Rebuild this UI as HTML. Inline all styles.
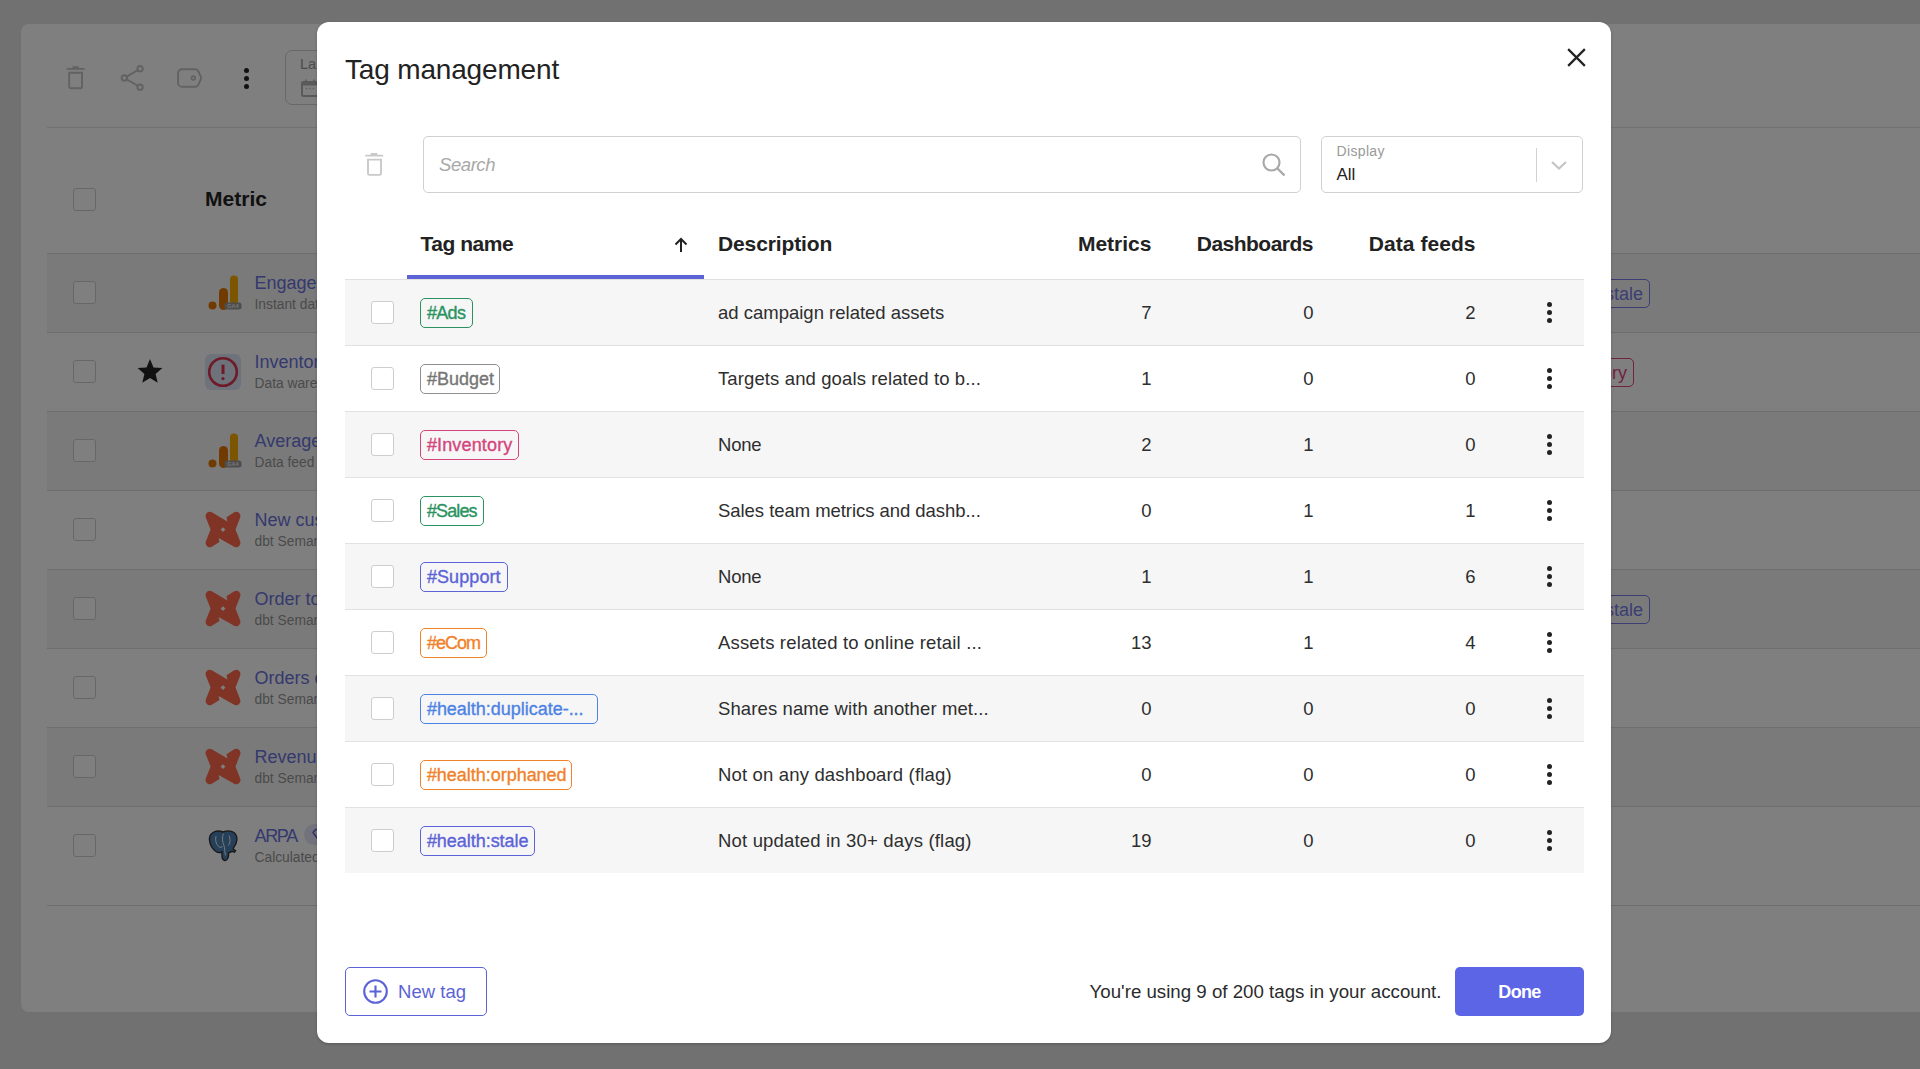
<!DOCTYPE html>
<html><head><meta charset="utf-8"><style>
html,body{margin:0;padding:0;}
body{width:1920px;height:1069px;overflow:hidden;position:relative;background:#e2e2e2;font-family:"Liberation Sans",sans-serif;}
.a{position:absolute;}
.t{position:absolute;white-space:nowrap;}
.tg{box-sizing:border-box;border-radius:5px;font-size:18px;line-height:27px;padding:0;text-align:center;white-space:nowrap;background:transparent;}
svg{overflow:visible;}
</style></head><body>
<div class="a" style="left:21px;top:24px;width:1960px;height:988px;background:#fff;border-radius:8px;"></div>
<svg class="a" style="left:64px;top:64px" width="24" height="28" viewBox="0 0 24 28">
<path d="M2.7 4.85h17.9M8.5 3.2h6.2" stroke="#c4c4c4" stroke-width="1.7" fill="none"/>
<path d="M5.2 8.7V22.8A1.5 1.5 0 0 0 6.7 24.3H16.5A1.5 1.5 0 0 0 18 22.8V8.7Z" stroke="#c4c4c4" stroke-width="1.9" fill="none"/></svg>
<svg class="a" style="left:118px;top:63px" width="30" height="30" viewBox="0 0 30 30">
<circle cx="6.3" cy="15" r="2.7" stroke="#c4c4c4" stroke-width="1.9" fill="none"/>
<circle cx="22.1" cy="5.7" r="2.7" stroke="#c4c4c4" stroke-width="1.9" fill="none"/>
<circle cx="22.1" cy="24.2" r="2.7" stroke="#c4c4c4" stroke-width="1.9" fill="none"/>
<path d="M8.6 13.6L19.8 7.1M8.6 16.4L19.8 22.8" stroke="#c4c4c4" stroke-width="1.8" fill="none"/></svg>
<svg class="a" style="left:174px;top:64px" width="32" height="28" viewBox="0 0 32 28">
<path d="M8 5.3H21.4Q23 5.3 24 6.8L26.8 12.5Q27.4 14 26.8 15.5L24 21.3Q23 22.8 21.4 22.8H8A3.9 3.9 0 0 1 4.1 18.9V9.2A3.9 3.9 0 0 1 8 5.3Z" stroke="#c4c4c4" stroke-width="1.9" fill="none"/>
<circle cx="19.3" cy="14" r="1.9" stroke="#c4c4c4" stroke-width="1.7" fill="none"/></svg>
<div class="a" style="left:244px;top:68.0px;width:5px;height:5px;border-radius:50%;background:#222"></div>
<div class="a" style="left:244px;top:76.0px;width:5px;height:5px;border-radius:50%;background:#222"></div>
<div class="a" style="left:244px;top:84.0px;width:5px;height:5px;border-radius:50%;background:#222"></div>
<div class="a" style="left:285px;top:50px;width:400px;height:55px;border:1.5px solid #d0d0d0;border-radius:7px;box-sizing:border-box;"></div>
<div class="t" style="left:300.00px;top:57.23px;font-size:14.5px;line-height:14.5px;color:#999;font-weight:400;font-style:normal;">Last 30 days</div>
<svg class="a" style="left:300px;top:78px" width="20" height="20" viewBox="0 0 20 20">
<rect x="2" y="4" width="16" height="14" rx="1.5" stroke="#b4b4b4" stroke-width="2" fill="none"/>
<rect x="2" y="4" width="16" height="3.5" fill="#b4b4b4"/>
<path d="M6 1.5v3M14 1.5v3" stroke="#b4b4b4" stroke-width="1.6"/>
<path d="M6 10.5h1.2M9.4 10.5h1.2M12.8 10.5h1.2" stroke="#b4b4b4" stroke-width="1.6"/></svg>
<div class="a" style="left:47px;top:127px;width:1900px;height:1px;background:#e2e2e2;"></div>
<div class="a" style="left:73px;top:188px;width:23px;height:23px;border:1.5px solid #cfcfcf;border-radius:3px;box-sizing:border-box;background:#fff;"></div>
<div class="t" style="left:205.00px;top:188.22px;font-size:21px;line-height:21px;color:#222;font-weight:700;font-style:normal;letter-spacing:0.026px;">Metric</div>
<div class="a" style="left:47px;top:253px;width:1900px;height:1px;background:#dcdcdc;"></div>
<div class="a" style="left:47px;top:254px;width:1900px;height:78px;background:#f5f5f5;"></div>
<div class="a" style="left:47px;top:332px;width:1900px;height:1px;background:#dcdcdc;"></div>
<div class="a" style="left:73px;top:281px;width:23px;height:23px;border:1.5px solid #cfcfcf;border-radius:3px;box-sizing:border-box;background:#fff;"></div>
<svg class="a" style="left:206px;top:274px" width="38" height="38" viewBox="0 0 38 38">
<circle cx="6.5" cy="31.5" r="4" fill="#e37400"/>
<rect x="13" y="14" width="9" height="22" rx="4.5" fill="#e37400"/>
<rect x="24" y="1.5" width="8" height="30" rx="4" fill="#f9ab00"/>
<rect x="18.5" y="28.5" width="17" height="7" rx="2.5" fill="#9c9c9c"/>
<text x="27" y="34.3" font-size="5.5" font-family="Liberation Sans" font-weight="700" text-anchor="middle" fill="#e8e8e8">GA4</text></svg>
<div class="t" style="left:254.50px;top:273.76px;font-size:18px;line-height:18px;color:#6a72dc;font-weight:400;font-style:normal;">Engagement rate</div>
<div class="t" style="left:254.50px;top:298.32px;font-size:13.8px;line-height:13.8px;color:#959595;font-weight:400;font-style:normal;">Instant data feed</div>
<div class="a tg" style="right:270px;top:279px;height:29px;padding:1px 6px 0;border:1.5px solid #747de6;color:#747de6;">#health:stale</div>
<div class="a" style="left:47px;top:411px;width:1900px;height:1px;background:#dcdcdc;"></div>
<div class="a" style="left:73px;top:360px;width:23px;height:23px;border:1.5px solid #cfcfcf;border-radius:3px;box-sizing:border-box;background:#fff;"></div>
<svg class="a" style="left:136.3px;top:356.7px" width="28" height="28" viewBox="0 0 24 24"><path d="M12 1.8l3 7.1 7.6.6-5.8 5 1.8 7.5L12 18l-6.6 4 1.8-7.5-5.8-5 7.6-.6z" fill="#222"/></svg>
<svg class="a" style="left:205px;top:353.7px" width="36" height="36" viewBox="0 0 36 36">
<rect x="0" y="0" width="36" height="36" rx="6" fill="#dce5f6"/>
<circle cx="18" cy="18" r="13.8" stroke="#dc3550" stroke-width="2.6" fill="none"/>
<path d="M18 10.7v9.3" stroke="#dc3550" stroke-width="3"/><circle cx="18" cy="24.6" r="1.6" fill="#dc3550"/></svg>
<div class="t" style="left:254.50px;top:352.76px;font-size:18px;line-height:18px;color:#6a72dc;font-weight:400;font-style:normal;">Inventory turnover</div>
<div class="t" style="left:254.50px;top:377.32px;font-size:13.8px;line-height:13.8px;color:#959595;font-weight:400;font-style:normal;">Data warehouse</div>
<div class="a tg" style="right:286px;top:358px;height:29px;padding:1px 6px 0;border:1.5px solid #e0457e;color:#e0457e;">#Inventory</div>
<div class="a" style="left:47px;top:412px;width:1900px;height:78px;background:#f5f5f5;"></div>
<div class="a" style="left:47px;top:490px;width:1900px;height:1px;background:#dcdcdc;"></div>
<div class="a" style="left:73px;top:439px;width:23px;height:23px;border:1.5px solid #cfcfcf;border-radius:3px;box-sizing:border-box;background:#fff;"></div>
<svg class="a" style="left:206px;top:432px" width="38" height="38" viewBox="0 0 38 38">
<circle cx="6.5" cy="31.5" r="4" fill="#e37400"/>
<rect x="13" y="14" width="9" height="22" rx="4.5" fill="#e37400"/>
<rect x="24" y="1.5" width="8" height="30" rx="4" fill="#f9ab00"/>
<rect x="18.5" y="28.5" width="17" height="7" rx="2.5" fill="#9c9c9c"/>
<text x="27" y="34.3" font-size="5.5" font-family="Liberation Sans" font-weight="700" text-anchor="middle" fill="#e8e8e8">GA4</text></svg>
<div class="t" style="left:254.50px;top:431.76px;font-size:18px;line-height:18px;color:#6a72dc;font-weight:400;font-style:normal;">Average session duration</div>
<div class="t" style="left:254.50px;top:456.32px;font-size:13.8px;line-height:13.8px;color:#959595;font-weight:400;font-style:normal;">Data feed</div>
<div class="a" style="left:47px;top:569px;width:1900px;height:1px;background:#dcdcdc;"></div>
<div class="a" style="left:73px;top:518px;width:23px;height:23px;border:1.5px solid #cfcfcf;border-radius:3px;box-sizing:border-box;background:#fff;"></div>
<svg class="a" style="left:205px;top:510.7px" width="36" height="37" viewBox="0 0 36 37">
<path d="M0.8 6.5A4.3 4.3 0 0 1 6.8 1.2L22.4 10.5L21.5 6.3L29.2 1.2A4.3 4.3 0 0 1 35.2 6.5L30.5 18.5L35.2 30.5A4.3 4.3 0 0 1 29.2 35.8L13.6 26.9L14.5 31L6.8 35.8A4.3 4.3 0 0 1 0.8 30.5L5.6 18.5Z" fill="#ff694b"/>
<path d="M18 16.2l2.4 2.4-2.4 2.4-2.4-2.4z" fill="#fff"/></svg>
<div class="t" style="left:254.50px;top:510.76px;font-size:18px;line-height:18px;color:#6a72dc;font-weight:400;font-style:normal;">New customers</div>
<div class="t" style="left:254.50px;top:535.32px;font-size:13.8px;line-height:13.8px;color:#959595;font-weight:400;font-style:normal;">dbt Semantic Layer</div>
<div class="a" style="left:47px;top:570px;width:1900px;height:78px;background:#f5f5f5;"></div>
<div class="a" style="left:47px;top:648px;width:1900px;height:1px;background:#dcdcdc;"></div>
<div class="a" style="left:73px;top:597px;width:23px;height:23px;border:1.5px solid #cfcfcf;border-radius:3px;box-sizing:border-box;background:#fff;"></div>
<svg class="a" style="left:205px;top:589.7px" width="36" height="37" viewBox="0 0 36 37">
<path d="M0.8 6.5A4.3 4.3 0 0 1 6.8 1.2L22.4 10.5L21.5 6.3L29.2 1.2A4.3 4.3 0 0 1 35.2 6.5L30.5 18.5L35.2 30.5A4.3 4.3 0 0 1 29.2 35.8L13.6 26.9L14.5 31L6.8 35.8A4.3 4.3 0 0 1 0.8 30.5L5.6 18.5Z" fill="#ff694b"/>
<path d="M18 16.2l2.4 2.4-2.4 2.4-2.4-2.4z" fill="#fff"/></svg>
<div class="t" style="left:254.50px;top:589.76px;font-size:18px;line-height:18px;color:#6a72dc;font-weight:400;font-style:normal;">Order total</div>
<div class="t" style="left:254.50px;top:614.32px;font-size:13.8px;line-height:13.8px;color:#959595;font-weight:400;font-style:normal;">dbt Semantic Layer</div>
<div class="a tg" style="right:270px;top:595px;height:29px;padding:1px 6px 0;border:1.5px solid #747de6;color:#747de6;">#health:stale</div>
<div class="a" style="left:47px;top:727px;width:1900px;height:1px;background:#dcdcdc;"></div>
<div class="a" style="left:73px;top:676px;width:23px;height:23px;border:1.5px solid #cfcfcf;border-radius:3px;box-sizing:border-box;background:#fff;"></div>
<svg class="a" style="left:205px;top:668.7px" width="36" height="37" viewBox="0 0 36 37">
<path d="M0.8 6.5A4.3 4.3 0 0 1 6.8 1.2L22.4 10.5L21.5 6.3L29.2 1.2A4.3 4.3 0 0 1 35.2 6.5L30.5 18.5L35.2 30.5A4.3 4.3 0 0 1 29.2 35.8L13.6 26.9L14.5 31L6.8 35.8A4.3 4.3 0 0 1 0.8 30.5L5.6 18.5Z" fill="#ff694b"/>
<path d="M18 16.2l2.4 2.4-2.4 2.4-2.4-2.4z" fill="#fff"/></svg>
<div class="t" style="left:254.50px;top:668.76px;font-size:18px;line-height:18px;color:#6a72dc;font-weight:400;font-style:normal;">Orders count</div>
<div class="t" style="left:254.50px;top:693.32px;font-size:13.8px;line-height:13.8px;color:#959595;font-weight:400;font-style:normal;">dbt Semantic Layer</div>
<div class="a" style="left:47px;top:728px;width:1900px;height:78px;background:#f5f5f5;"></div>
<div class="a" style="left:47px;top:806px;width:1900px;height:1px;background:#dcdcdc;"></div>
<div class="a" style="left:73px;top:755px;width:23px;height:23px;border:1.5px solid #cfcfcf;border-radius:3px;box-sizing:border-box;background:#fff;"></div>
<svg class="a" style="left:205px;top:747.7px" width="36" height="37" viewBox="0 0 36 37">
<path d="M0.8 6.5A4.3 4.3 0 0 1 6.8 1.2L22.4 10.5L21.5 6.3L29.2 1.2A4.3 4.3 0 0 1 35.2 6.5L30.5 18.5L35.2 30.5A4.3 4.3 0 0 1 29.2 35.8L13.6 26.9L14.5 31L6.8 35.8A4.3 4.3 0 0 1 0.8 30.5L5.6 18.5Z" fill="#ff694b"/>
<path d="M18 16.2l2.4 2.4-2.4 2.4-2.4-2.4z" fill="#fff"/></svg>
<div class="t" style="left:254.50px;top:747.76px;font-size:18px;line-height:18px;color:#6a72dc;font-weight:400;font-style:normal;">Revenue</div>
<div class="t" style="left:254.50px;top:772.32px;font-size:13.8px;line-height:13.8px;color:#959595;font-weight:400;font-style:normal;">dbt Semantic Layer</div>
<div class="a" style="left:47px;top:905px;width:1900px;height:1px;background:#dcdcdc;"></div>
<div class="a" style="left:73px;top:834px;width:23px;height:23px;border:1.5px solid #cfcfcf;border-radius:3px;box-sizing:border-box;background:#fff;"></div>
<svg class="a" style="left:208px;top:829px" width="31" height="33" viewBox="0 0 31 33">
<path d="M5 3.5C8 1.5 12 1.8 15 3c3-1.2 8-1.5 11 .5 3 2.5 3.5 7 2 11-1 2.5-2.5 3.5-2.8 5.5l2.3 1.6-1 1.5-2.6-.8c-1 1-2 1.3-3.2 1.3 0 3-.5 6.5-2.5 7.5-2.2 1.1-4-.8-4.2-3.5L14 23c-2 .8-4 1-6-.5C5 20.5 2 16 1.5 11 1.2 7.5 2.5 5 5 3.5z" fill="#4a80b0" stroke="#333" stroke-width="1.4"/>
<path d="M8 7c-1 4 0 8 2.5 10.5 1.5 1.4 3.5 1 4 -.5M21 6.5c1.5 3 1.5 7-.5 10M15.5 4.5c-1.5 3-1.5 8 .5 12 1 2.5.5 7 1.5 10" stroke="#fff" stroke-width="0.9" fill="none"/></svg>
<div class="t" style="left:254.50px;top:826.76px;font-size:18px;line-height:18px;color:#6a72dc;font-weight:400;font-style:normal;letter-spacing:-1.325px;">ARPA</div>
<div class="t" style="left:254.50px;top:851.32px;font-size:13.8px;line-height:13.8px;color:#959595;font-weight:400;font-style:normal;">Calculated metric</div>
<div class="a" style="left:304px;top:823.5px;width:40px;height:21px;background:#e2e4f7;border-radius:10.5px;"></div>
<svg class="a" style="left:311px;top:828px" width="12" height="12" viewBox="0 0 12 12"><path d="M2 4.5L4.5 1.5h4L11 4.5 6.5 10.5z" fill="none" stroke="#5b63d6" stroke-width="1.5" stroke-linejoin="round"/></svg>
<div class="a" style="left:0;top:0;width:1920px;height:1069px;background:rgba(0,0,0,0.5)"></div>
<div class="a" style="left:317.4px;top:22.2px;width:1293.8px;height:1020.8px;background:#fff;border-radius:12px;box-shadow:0 1px 3px rgba(0,0,0,0.22);"></div>
<div class="t" style="left:345.00px;top:55.80px;font-size:28px;line-height:28px;color:#222;font-weight:400;font-style:normal;letter-spacing:-0.168px;">Tag management</div>
<svg class="a" style="left:1564px;top:45px" width="25" height="25" viewBox="0 0 25 25">
<path d="M4.15 4.15l16.7 16.7M20.85 4.15l-16.7 16.7" stroke="#222" stroke-width="2.2"/></svg>
<svg class="a" style="left:362px;top:151px" width="24" height="27" viewBox="0 0 24 27">
<path d="M3.2 4.55h18M8.7 3h6.6" stroke="#c9c9c9" stroke-width="1.8" fill="none"/>
<path d="M6 8.6V22.4A1.5 1.5 0 0 0 7.5 23.9H17.5A1.5 1.5 0 0 0 19 22.4V8.6Z" stroke="#c9c9c9" stroke-width="1.9" fill="none"/></svg>
<div class="a" style="left:423px;top:136px;width:878px;height:57px;border:1.5px solid #d0d0d0;border-radius:5px;box-sizing:border-box;"></div>
<div class="t" style="left:439.00px;top:156.24px;font-size:18.5px;line-height:18.5px;color:#a8a8a8;font-weight:400;font-style:italic;letter-spacing:-0.426px;">Search</div>
<svg class="a" style="left:1260px;top:151px" width="28" height="28" viewBox="0 0 28 28">
<circle cx="11.5" cy="11.5" r="8" stroke="#a9a9a9" stroke-width="2.2" fill="none"/>
<path d="M17.5 17.5l7 7" stroke="#a9a9a9" stroke-width="2.4"/></svg>
<div class="a" style="left:1321px;top:136px;width:262px;height:57px;border:1.5px solid #d0d0d0;border-radius:5px;box-sizing:border-box;"></div>
<div class="t" style="left:1336.50px;top:143.65px;font-size:14px;line-height:14px;color:#999;font-weight:400;font-style:normal;letter-spacing:0.349px;">Display</div>
<div class="t" style="left:1336.50px;top:165.91px;font-size:17px;line-height:17px;color:#222;font-weight:400;font-style:normal;">All</div>
<div class="a" style="left:1536px;top:148px;width:1px;height:34px;background:#d2d2d2;"></div>
<svg class="a" style="left:1549px;top:157.8px" width="20" height="14" viewBox="0 0 20 14">
<path d="M3 4l7 6.5L17 4" stroke="#c4c4c4" stroke-width="2.2" fill="none"/></svg>
<div class="t" style="left:420.50px;top:232.72px;font-size:21px;line-height:21px;color:#222;font-weight:700;font-style:normal;letter-spacing:-0.470px;">Tag name</div>
<svg class="a" style="left:672px;top:236px" width="18" height="18" viewBox="0 0 18 18">
<path d="M9 16V3M3.5 8.5L9 3l5.5 5.5" stroke="#222" stroke-width="2" fill="none"/></svg>
<div class="t" style="left:718.00px;top:232.72px;font-size:21px;line-height:21px;color:#222;font-weight:700;font-style:normal;letter-spacing:-0.119px;">Description</div>
<div class="t" style="right:768.50px;margin-right:-0.008px;top:232.72px;font-size:21px;line-height:21px;color:#222;font-weight:700;font-style:normal;letter-spacing:0.008px;">Metrics</div>
<div class="t" style="right:606.50px;margin-right:0.510px;top:232.72px;font-size:21px;line-height:21px;color:#222;font-weight:700;font-style:normal;letter-spacing:-0.510px;">Dashboards</div>
<div class="t" style="right:444.50px;margin-right:-0.063px;top:232.72px;font-size:21px;line-height:21px;color:#222;font-weight:700;font-style:normal;letter-spacing:0.063px;">Data feeds</div>
<div class="a" style="left:345px;top:279px;width:1239px;height:1px;background:#e0e0e0;"></div>
<div class="a" style="left:407px;top:275px;width:297px;height:4px;background:#5b63d6;"></div>
<div class="a" style="left:345px;top:280px;width:1239px;height:65px;background:#f6f6f6;"></div>
<div class="a" style="left:345px;top:345px;width:1239px;height:1px;background:#e2e2e2;"></div>
<div class="a" style="left:370.5px;top:301px;width:23px;height:23px;border:1.5px solid #cdcdcd;border-radius:3px;box-sizing:border-box;background:#fff;"></div>
<div class="a" style="left:420px;top:298.2px;width:53px;height:29.5px;border:1.5px solid #2a9361;border-radius:5px;box-sizing:border-box;"></div>
<div class="t" style="left:426.90px;top:304.26px;font-size:18px;line-height:18px;color:#2a9361;font-weight:400;font-style:normal;letter-spacing:-0.676px;-webkit-text-stroke:0.35px #2a9361;">#Ads</div>
<div class="t" style="left:718.00px;top:304.34px;font-size:18.5px;line-height:18.5px;color:#2e2e2e;font-weight:400;font-style:normal;letter-spacing:0.000px;">ad campaign related assets</div>
<div class="t" style="right:768.50px;top:304.34px;font-size:18.5px;line-height:18.5px;color:#2e2e2e;font-weight:400;font-style:normal;">7</div>
<div class="t" style="right:606.50px;top:304.34px;font-size:18.5px;line-height:18.5px;color:#2e2e2e;font-weight:400;font-style:normal;">0</div>
<div class="t" style="right:444.50px;top:304.34px;font-size:18.5px;line-height:18.5px;color:#2e2e2e;font-weight:400;font-style:normal;">2</div>
<div class="a" style="left:1546.5px;top:302.1px;width:5px;height:5px;border-radius:50%;background:#222"></div>
<div class="a" style="left:1546.5px;top:310.0px;width:5px;height:5px;border-radius:50%;background:#222"></div>
<div class="a" style="left:1546.5px;top:317.9px;width:5px;height:5px;border-radius:50%;background:#222"></div>
<div class="a" style="left:345px;top:411px;width:1239px;height:1px;background:#e2e2e2;"></div>
<div class="a" style="left:370.5px;top:367px;width:23px;height:23px;border:1.5px solid #cdcdcd;border-radius:3px;box-sizing:border-box;background:#fff;"></div>
<div class="a" style="left:420px;top:364.2px;width:80px;height:29.5px;border:1.5px solid #8e8e8e;border-radius:5px;box-sizing:border-box;"></div>
<div class="t" style="left:426.90px;top:370.26px;font-size:18px;line-height:18px;color:#767676;font-weight:400;font-style:normal;letter-spacing:-0.010px;-webkit-text-stroke:0.35px #767676;">#Budget</div>
<div class="t" style="left:718.00px;top:370.34px;font-size:18.5px;line-height:18.5px;color:#2e2e2e;font-weight:400;font-style:normal;letter-spacing:0.115px;">Targets and goals related to b...</div>
<div class="t" style="right:768.50px;top:370.34px;font-size:18.5px;line-height:18.5px;color:#2e2e2e;font-weight:400;font-style:normal;">1</div>
<div class="t" style="right:606.50px;top:370.34px;font-size:18.5px;line-height:18.5px;color:#2e2e2e;font-weight:400;font-style:normal;">0</div>
<div class="t" style="right:444.50px;top:370.34px;font-size:18.5px;line-height:18.5px;color:#2e2e2e;font-weight:400;font-style:normal;">0</div>
<div class="a" style="left:1546.5px;top:368.1px;width:5px;height:5px;border-radius:50%;background:#222"></div>
<div class="a" style="left:1546.5px;top:376.0px;width:5px;height:5px;border-radius:50%;background:#222"></div>
<div class="a" style="left:1546.5px;top:383.9px;width:5px;height:5px;border-radius:50%;background:#222"></div>
<div class="a" style="left:345px;top:412px;width:1239px;height:65px;background:#f6f6f6;"></div>
<div class="a" style="left:345px;top:477px;width:1239px;height:1px;background:#e2e2e2;"></div>
<div class="a" style="left:370.5px;top:433px;width:23px;height:23px;border:1.5px solid #cdcdcd;border-radius:3px;box-sizing:border-box;background:#fff;"></div>
<div class="a" style="left:420px;top:430.2px;width:99px;height:29.5px;border:1.5px solid #d4457c;border-radius:5px;box-sizing:border-box;"></div>
<div class="t" style="left:426.90px;top:436.26px;font-size:18px;line-height:18px;color:#d4457c;font-weight:400;font-style:normal;letter-spacing:0.150px;-webkit-text-stroke:0.35px #d4457c;">#Inventory</div>
<div class="t" style="left:718.00px;top:436.34px;font-size:18.5px;line-height:18.5px;color:#2e2e2e;font-weight:400;font-style:normal;letter-spacing:-0.213px;">None</div>
<div class="t" style="right:768.50px;top:436.34px;font-size:18.5px;line-height:18.5px;color:#2e2e2e;font-weight:400;font-style:normal;">2</div>
<div class="t" style="right:606.50px;top:436.34px;font-size:18.5px;line-height:18.5px;color:#2e2e2e;font-weight:400;font-style:normal;">1</div>
<div class="t" style="right:444.50px;top:436.34px;font-size:18.5px;line-height:18.5px;color:#2e2e2e;font-weight:400;font-style:normal;">0</div>
<div class="a" style="left:1546.5px;top:434.1px;width:5px;height:5px;border-radius:50%;background:#222"></div>
<div class="a" style="left:1546.5px;top:442.0px;width:5px;height:5px;border-radius:50%;background:#222"></div>
<div class="a" style="left:1546.5px;top:449.9px;width:5px;height:5px;border-radius:50%;background:#222"></div>
<div class="a" style="left:345px;top:543px;width:1239px;height:1px;background:#e2e2e2;"></div>
<div class="a" style="left:370.5px;top:499px;width:23px;height:23px;border:1.5px solid #cdcdcd;border-radius:3px;box-sizing:border-box;background:#fff;"></div>
<div class="a" style="left:420px;top:496.2px;width:64px;height:29.5px;border:1.5px solid #2a9361;border-radius:5px;box-sizing:border-box;"></div>
<div class="t" style="left:426.90px;top:502.26px;font-size:18px;line-height:18px;color:#2a9361;font-weight:400;font-style:normal;letter-spacing:-0.867px;-webkit-text-stroke:0.35px #2a9361;">#Sales</div>
<div class="t" style="left:718.00px;top:502.34px;font-size:18.5px;line-height:18.5px;color:#2e2e2e;font-weight:400;font-style:normal;letter-spacing:-0.048px;">Sales team metrics and dashb...</div>
<div class="t" style="right:768.50px;top:502.34px;font-size:18.5px;line-height:18.5px;color:#2e2e2e;font-weight:400;font-style:normal;">0</div>
<div class="t" style="right:606.50px;top:502.34px;font-size:18.5px;line-height:18.5px;color:#2e2e2e;font-weight:400;font-style:normal;">1</div>
<div class="t" style="right:444.50px;top:502.34px;font-size:18.5px;line-height:18.5px;color:#2e2e2e;font-weight:400;font-style:normal;">1</div>
<div class="a" style="left:1546.5px;top:500.1px;width:5px;height:5px;border-radius:50%;background:#222"></div>
<div class="a" style="left:1546.5px;top:508.0px;width:5px;height:5px;border-radius:50%;background:#222"></div>
<div class="a" style="left:1546.5px;top:515.9px;width:5px;height:5px;border-radius:50%;background:#222"></div>
<div class="a" style="left:345px;top:544px;width:1239px;height:65px;background:#f6f6f6;"></div>
<div class="a" style="left:345px;top:609px;width:1239px;height:1px;background:#e2e2e2;"></div>
<div class="a" style="left:370.5px;top:565px;width:23px;height:23px;border:1.5px solid #cdcdcd;border-radius:3px;box-sizing:border-box;background:#fff;"></div>
<div class="a" style="left:420px;top:562.2px;width:87.7px;height:29.5px;border:1.5px solid #5b63d6;border-radius:5px;box-sizing:border-box;"></div>
<div class="t" style="left:426.90px;top:568.26px;font-size:18px;line-height:18px;color:#5b63d6;font-weight:400;font-style:normal;letter-spacing:0.092px;-webkit-text-stroke:0.35px #5b63d6;">#Support</div>
<div class="t" style="left:718.00px;top:568.34px;font-size:18.5px;line-height:18.5px;color:#2e2e2e;font-weight:400;font-style:normal;letter-spacing:-0.213px;">None</div>
<div class="t" style="right:768.50px;top:568.34px;font-size:18.5px;line-height:18.5px;color:#2e2e2e;font-weight:400;font-style:normal;">1</div>
<div class="t" style="right:606.50px;top:568.34px;font-size:18.5px;line-height:18.5px;color:#2e2e2e;font-weight:400;font-style:normal;">1</div>
<div class="t" style="right:444.50px;top:568.34px;font-size:18.5px;line-height:18.5px;color:#2e2e2e;font-weight:400;font-style:normal;">6</div>
<div class="a" style="left:1546.5px;top:566.1px;width:5px;height:5px;border-radius:50%;background:#222"></div>
<div class="a" style="left:1546.5px;top:574.0px;width:5px;height:5px;border-radius:50%;background:#222"></div>
<div class="a" style="left:1546.5px;top:581.9px;width:5px;height:5px;border-radius:50%;background:#222"></div>
<div class="a" style="left:345px;top:675px;width:1239px;height:1px;background:#e2e2e2;"></div>
<div class="a" style="left:370.5px;top:631px;width:23px;height:23px;border:1.5px solid #cdcdcd;border-radius:3px;box-sizing:border-box;background:#fff;"></div>
<div class="a" style="left:420px;top:628.2px;width:67px;height:29.5px;border:1.5px solid #f0822a;border-radius:5px;box-sizing:border-box;"></div>
<div class="t" style="left:426.90px;top:634.26px;font-size:18px;line-height:18px;color:#f0822a;font-weight:400;font-style:normal;letter-spacing:-1.008px;-webkit-text-stroke:0.35px #f0822a;">#eCom</div>
<div class="t" style="left:718.00px;top:634.34px;font-size:18.5px;line-height:18.5px;color:#2e2e2e;font-weight:400;font-style:normal;letter-spacing:0.172px;">Assets related to online retail ...</div>
<div class="t" style="right:768.50px;top:634.34px;font-size:18.5px;line-height:18.5px;color:#2e2e2e;font-weight:400;font-style:normal;">13</div>
<div class="t" style="right:606.50px;top:634.34px;font-size:18.5px;line-height:18.5px;color:#2e2e2e;font-weight:400;font-style:normal;">1</div>
<div class="t" style="right:444.50px;top:634.34px;font-size:18.5px;line-height:18.5px;color:#2e2e2e;font-weight:400;font-style:normal;">4</div>
<div class="a" style="left:1546.5px;top:632.1px;width:5px;height:5px;border-radius:50%;background:#222"></div>
<div class="a" style="left:1546.5px;top:640.0px;width:5px;height:5px;border-radius:50%;background:#222"></div>
<div class="a" style="left:1546.5px;top:647.9px;width:5px;height:5px;border-radius:50%;background:#222"></div>
<div class="a" style="left:345px;top:676px;width:1239px;height:65px;background:#f6f6f6;"></div>
<div class="a" style="left:345px;top:741px;width:1239px;height:1px;background:#e2e2e2;"></div>
<div class="a" style="left:370.5px;top:697px;width:23px;height:23px;border:1.5px solid #cdcdcd;border-radius:3px;box-sizing:border-box;background:#fff;"></div>
<div class="a" style="left:420px;top:694.2px;width:178px;height:29.5px;border:1.5px solid #4d83e4;border-radius:5px;box-sizing:border-box;"></div>
<div class="t" style="left:426.90px;top:700.26px;font-size:18px;line-height:18px;color:#4d83e4;font-weight:400;font-style:normal;letter-spacing:-0.020px;-webkit-text-stroke:0.35px #4d83e4;">#health:duplicate-...</div>
<div class="t" style="left:718.00px;top:700.34px;font-size:18.5px;line-height:18.5px;color:#2e2e2e;font-weight:400;font-style:normal;letter-spacing:0.113px;">Shares name with another met...</div>
<div class="t" style="right:768.50px;top:700.34px;font-size:18.5px;line-height:18.5px;color:#2e2e2e;font-weight:400;font-style:normal;">0</div>
<div class="t" style="right:606.50px;top:700.34px;font-size:18.5px;line-height:18.5px;color:#2e2e2e;font-weight:400;font-style:normal;">0</div>
<div class="t" style="right:444.50px;top:700.34px;font-size:18.5px;line-height:18.5px;color:#2e2e2e;font-weight:400;font-style:normal;">0</div>
<div class="a" style="left:1546.5px;top:698.1px;width:5px;height:5px;border-radius:50%;background:#222"></div>
<div class="a" style="left:1546.5px;top:706.0px;width:5px;height:5px;border-radius:50%;background:#222"></div>
<div class="a" style="left:1546.5px;top:713.9px;width:5px;height:5px;border-radius:50%;background:#222"></div>
<div class="a" style="left:345px;top:807px;width:1239px;height:1px;background:#e2e2e2;"></div>
<div class="a" style="left:370.5px;top:763px;width:23px;height:23px;border:1.5px solid #cdcdcd;border-radius:3px;box-sizing:border-box;background:#fff;"></div>
<div class="a" style="left:420px;top:760.2px;width:152px;height:29.5px;border:1.5px solid #f0822a;border-radius:5px;box-sizing:border-box;"></div>
<div class="t" style="left:426.90px;top:766.26px;font-size:18px;line-height:18px;color:#f0822a;font-weight:400;font-style:normal;letter-spacing:-0.028px;-webkit-text-stroke:0.35px #f0822a;">#health:orphaned</div>
<div class="t" style="left:718.00px;top:766.34px;font-size:18.5px;line-height:18.5px;color:#2e2e2e;font-weight:400;font-style:normal;letter-spacing:0.163px;">Not on any dashboard (flag)</div>
<div class="t" style="right:768.50px;top:766.34px;font-size:18.5px;line-height:18.5px;color:#2e2e2e;font-weight:400;font-style:normal;">0</div>
<div class="t" style="right:606.50px;top:766.34px;font-size:18.5px;line-height:18.5px;color:#2e2e2e;font-weight:400;font-style:normal;">0</div>
<div class="t" style="right:444.50px;top:766.34px;font-size:18.5px;line-height:18.5px;color:#2e2e2e;font-weight:400;font-style:normal;">0</div>
<div class="a" style="left:1546.5px;top:764.1px;width:5px;height:5px;border-radius:50%;background:#222"></div>
<div class="a" style="left:1546.5px;top:772.0px;width:5px;height:5px;border-radius:50%;background:#222"></div>
<div class="a" style="left:1546.5px;top:779.9px;width:5px;height:5px;border-radius:50%;background:#222"></div>
<div class="a" style="left:345px;top:808px;width:1239px;height:65px;background:#f6f6f6;"></div>
<div class="a" style="left:370.5px;top:829px;width:23px;height:23px;border:1.5px solid #cdcdcd;border-radius:3px;box-sizing:border-box;background:#fff;"></div>
<div class="a" style="left:420px;top:826.2px;width:115px;height:29.5px;border:1.5px solid #5b63d6;border-radius:5px;box-sizing:border-box;"></div>
<div class="t" style="left:426.90px;top:832.26px;font-size:18px;line-height:18px;color:#5b63d6;font-weight:400;font-style:normal;letter-spacing:-0.039px;-webkit-text-stroke:0.35px #5b63d6;">#health:stale</div>
<div class="t" style="left:718.00px;top:832.34px;font-size:18.5px;line-height:18.5px;color:#2e2e2e;font-weight:400;font-style:normal;letter-spacing:0.176px;">Not updated in 30+ days (flag)</div>
<div class="t" style="right:768.50px;top:832.34px;font-size:18.5px;line-height:18.5px;color:#2e2e2e;font-weight:400;font-style:normal;">19</div>
<div class="t" style="right:606.50px;top:832.34px;font-size:18.5px;line-height:18.5px;color:#2e2e2e;font-weight:400;font-style:normal;">0</div>
<div class="t" style="right:444.50px;top:832.34px;font-size:18.5px;line-height:18.5px;color:#2e2e2e;font-weight:400;font-style:normal;">0</div>
<div class="a" style="left:1546.5px;top:830.1px;width:5px;height:5px;border-radius:50%;background:#222"></div>
<div class="a" style="left:1546.5px;top:838.0px;width:5px;height:5px;border-radius:50%;background:#222"></div>
<div class="a" style="left:1546.5px;top:845.9px;width:5px;height:5px;border-radius:50%;background:#222"></div>
<div class="a" style="left:345px;top:967px;width:142px;height:49px;border:1.3px solid #5b63d6;border-radius:5px;box-sizing:border-box;"></div>
<svg class="a" style="left:362px;top:978px" width="27" height="27" viewBox="0 0 27 27">
<circle cx="13.5" cy="13.5" r="11.3" stroke="#5b63d6" stroke-width="2.1" fill="none"/>
<path d="M13.5 7.5v12M7.5 13.5h12" stroke="#5b63d6" stroke-width="2.1"/></svg>
<div class="t" style="left:398.00px;top:982.74px;font-size:18.5px;line-height:18.5px;color:#5b63d6;font-weight:400;font-style:normal;letter-spacing:0.020px;">New tag</div>
<div class="t" style="right:478.50px;margin-right:0.001px;top:983.37px;font-size:18.7px;line-height:18.7px;color:#2b2b2b;font-weight:400;font-style:normal;letter-spacing:-0.001px;">You're using 9 of 200 tags in your account.</div>
<div class="a" style="left:1455px;top:967px;width:129px;height:49px;background:#5b65e6;border-radius:5px;"></div>
<div class="t" style="left:1519.50px;top:982.96px;font-size:18px;line-height:18px;color:#fff;font-weight:700;font-style:normal;letter-spacing:-0.663px;transform:translateX(-50%);">Done</div>
</body></html>
